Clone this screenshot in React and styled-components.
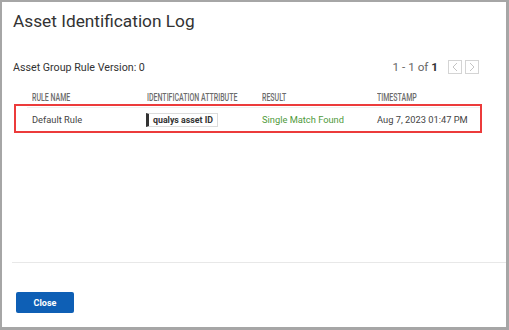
import React from "react";
import styled, { createGlobalStyle } from "styled-components";

const Global = createGlobalStyle`
  html, body { margin: 0; padding: 0; background: #fff; }
  body { font-family: Roboto, "Liberation Sans", Arial, sans-serif; }
  * { box-sizing: border-box; }
`;

const Modal = styled.div`
  width: 509px;
  height: 330px;
  border-style: solid;
  border-color: #a6a6a6;
  border-width: 2px 3px 3px 2px;
  background: #fff;
  display: flex;
  flex-direction: column;
`;

const Title = styled.h1`
  margin: 0;
  padding: 7px 11px 0;
  font-size: 17.3px;
  line-height: 24px;
  font-weight: 400;
  color: #333;
`;

const Body = styled.div`
  flex: 1;
  display: flex;
  flex-direction: column;
`;

const Toolbar = styled.div`
  display: flex;
  align-items: center;
  justify-content: space-between;
  padding: 0 27px 0 11px;
  margin-top: 26px;
  height: 16px;
`;

const Version = styled.div`
  font-size: 10.7px;
  color: #333;
`;

const Pager = styled.div`
  display: flex;
  align-items: center;
`;

const Count = styled.span`
  font-size: 11.7px;
  color: #666;
  margin-right: 10px;
  b { color: #333; font-weight: 700; }
`;

const PageBtn = styled.span`
  width: 14px;
  height: 14px;
  border: 1px solid #d4d4d4;
  display: flex;
  align-items: center;
  justify-content: center;
  margin-left: ${(p) => (p.$gap ? "3px" : "0")};
`;

const Table = styled.div`
  margin: 11px 0 0 12px;
  width: 468px;
`;

const HeadRow = styled.div`
  display: grid;
  grid-template-columns: 115px 115px 115px 115px;
  padding-left: 18px;
  height: 18px;
  align-items: center;
`;

const HeadCell = styled.span`
  display: inline-block;
  font-size: 10px;
  font-weight: 500;
  color: #6b6b6b;
  text-transform: uppercase;
  white-space: nowrap;
  transform: scaleX(0.7);
  transform-origin: left center;
`;

const Row = styled.div`
  position: relative;
  display: grid;
  grid-template-columns: 115px 115px 115px 115px;
  padding-left: 16px;
  height: 29px;
  align-items: center;
  border: 2px solid #ec3b3b;
  &::before {
    content: "";
    position: absolute;
    left: 11px;
    right: 0;
    top: 1px;
    height: 1px;
    background: #f0f0f0;
  }
`;

const Cell = styled.span`
  font-size: 9.3px;
  color: ${(p) => p.$color || "#444"};
  white-space: nowrap;
  padding-top: 2px;
`;

const Chip = styled.span`
  justify-self: start;
  display: inline-flex;
  align-items: center;
  height: 14px;
  border: 1px solid #dcdcdc;
  border-left: 3px solid #333;
  padding: 0 4px 0 4px;
  font-size: 8.8px;
  font-weight: 700;
  color: #333;
  margin-left: -1px;
  margin-top: 2px;
`;

const Footer = styled.div`
  border-top: 1px solid #e8e8e8;
  margin-left: 10px;
  padding: 28px 0 14px 4px;
`;

const CloseButton = styled.button`
  width: 58px;
  height: 21px;
  border: none;
  border-radius: 2px;
  background: #0e5fb5;
  color: #fff;
  font-family: Roboto, "Liberation Sans", Arial, sans-serif;
  font-size: 9px;
  font-weight: 700;
  padding: 0;
  cursor: pointer;
`;

const Chevron = ({ dir }) => (
  <svg width="8" height="10" viewBox="0 0 8 10" fill="none">
    <path
      d={dir === "left" ? "M6 1 L2 5 L6 9" : "M2 1 L6 5 L2 9"}
      stroke="#c4c4c4"
      strokeWidth="1"
    />
  </svg>
);

export default function App() {
  return (
    <>
      <Global />
      <Modal>
        <Title>Asset Identification Log</Title>
        <Body>
          <Toolbar>
            <Version>Asset Group Rule Version: 0</Version>
            <Pager>
              <Count>
                1 - 1 of <b>1</b>
              </Count>
              <PageBtn>
                <Chevron dir="left" />
              </PageBtn>
              <PageBtn $gap>
                <Chevron dir="right" />
              </PageBtn>
            </Pager>
          </Toolbar>
          <Table>
            <HeadRow>
              <span><HeadCell>Rule Name</HeadCell></span>
              <span><HeadCell>Identification Attribute</HeadCell></span>
              <span><HeadCell>Result</HeadCell></span>
              <span><HeadCell>Timestamp</HeadCell></span>
            </HeadRow>
            <Row>
              <Cell>Default Rule</Cell>
              <Chip>qualys asset ID</Chip>
              <Cell $color="#4f9a3c">Single Match Found</Cell>
              <Cell>Aug 7, 2023 01:47 PM</Cell>
            </Row>
          </Table>
        </Body>
        <Footer>
          <CloseButton>Close</CloseButton>
        </Footer>
      </Modal>
    </>
  );
}
